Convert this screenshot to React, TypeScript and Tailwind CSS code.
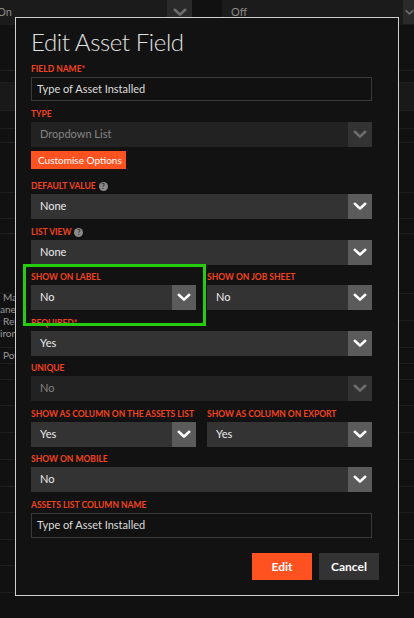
import React from "react";

const Chevron = ({ muted }: { muted?: boolean }) => (
  <svg width="14" height="9" viewBox="0 0 14 9" fill="none">
    <polyline
      points="1.8,1.8 7,6.6 12.2,1.8"
      stroke={muted ? "#6e6e6e" : "#ffffff"}
      strokeWidth="2.6"
      strokeLinecap="round"
      strokeLinejoin="round"
    />
  </svg>
);

const Help = () => (
  <span className="ml-[3px] inline-flex h-[9px] w-[9px] items-center justify-center rounded-full bg-[#8a8a8a] text-[7px] font-bold leading-none text-[#222]">
    ?
  </span>
);

const Label = ({ text, help }: { text: string; help?: boolean }) => (
  <div className="mb-[1px] flex h-[13px] items-center whitespace-nowrap text-[8.5px] font-bold uppercase leading-[13px] text-[#f4431c]">
    {text}
    {help && <Help />}
  </div>
);

const Select = ({ value, disabled }: { value: string; disabled?: boolean }) => (
  <div
    className={`flex h-[25px] items-center ${disabled ? "bg-[#222]" : "bg-[#333]"}`}
  >
    <span
      className={`flex-1 pl-[9px] text-[11px] ${disabled ? "text-[#858585]" : "text-[#ececec]"}`}
    >
      {value}
    </span>
    <div
      className={`flex h-full w-[24px] items-center justify-center ${disabled ? "bg-[#333]" : "bg-[#5b5b5b]"}`}
    >
      <Chevron muted={disabled} />
    </div>
  </div>
);

const Input = ({ value, h }: { value: string; h: string }) => (
  <div
    className={`flex ${h} items-center border border-[#3a3a3a] bg-[#111] pl-[5px] text-[11px] text-[#dedede]`}
  >
    {value}
  </div>
);

const Field = ({
  label,
  help,
  mt,
  children,
}: {
  label: string;
  help?: boolean;
  mt: string;
  children: React.ReactNode;
}) => (
  <div className={mt}>
    <Label text={label} help={help} />
    {children}
  </div>
);

// heights of the rows of the page behind the dialog (border included)
const bgRows = [46, 12, 28, 18, 14, 50, 26, 15, 60, 27, 27, 16, 16, 26, 27, 27, 27, 26, 27, 26, 27, 26];

const Background = () => (
  <div className="flex flex-col">
    <div className="flex h-[25px] border-b border-[#1d1d1d]">
      <div className="flex w-[167px] items-center bg-[#1b1b1b] text-[11px] text-[#8a8a8a]">
        <span className="-ml-[3px]">On</span>
      </div>
      <div className="flex w-[25px] items-center justify-center bg-[#2a2a2a]">
        <Chevron muted />
      </div>
      <div className="w-[30px]" />
      <div className="flex flex-1 items-center bg-[#1b1b1b] pl-[9px] text-[11px] text-[#8a8a8a]">
        Off
      </div>
      <div className="flex w-[11px] items-center bg-[#2a2a2a] pl-[2px]">
        <Chevron muted />
      </div>
    </div>
    {bgRows.map((h, i) => (
      <div
        key={i}
        style={{ height: h }}
        className={`border-b border-[#1e1e1e] ${i === 2 ? "bg-[#191919]" : ""}`}
      >
        {i === 9 && (
          <div className="-mt-[3px] text-[10px] leading-[12px] text-[#9a9a9a]">
            <div className="pl-[3px]">Ma</div>
            <div>anel</div>
            <div className="pl-[3px]">Rel</div>
            <div>iron</div>
          </div>
        )}
        {i === 11 && (
          <div className="pl-[3px] pt-[1px] text-[10px] leading-[12px] text-[#9a9a9a]">
            Pow
          </div>
        )}
      </div>
    ))}
  </div>
);

export default function App() {
  return (
    <div className="relative h-[618px] w-[414px] overflow-hidden bg-[#111] font-['Lato',sans-serif]">
      <Background />

      <div className="absolute left-[15px] top-[17px] h-[579px] w-[384px] border border-[#cfcfcf] bg-[#121212] pl-[15px] pr-[26px] pt-[7px]">
        <h1 className="h-[34px] text-[24px] font-light leading-[34px] tracking-[-0.4px] text-[#e2e2e2]">
          Edit Asset Field
        </h1>

        <Field label="Field Name*" mt="mt-[4px]">
          <Input value="Type of Asset Installed" h="h-[24px]" />
        </Field>

        <Field label="Type" mt="mt-[7px]">
          <Select value="Dropdown List" disabled />
        </Field>
        <button className="mt-[4px] block h-[18px] w-[95px] whitespace-nowrap bg-[#ff5220] pl-[7px] text-left text-[10px] text-white">
          Customise Options
        </button>

        <Field label="Default Value" help mt="mt-[11px]">
          <Select value="None" />
        </Field>
        <Field label="List View" help mt="mt-[7px]">
          <Select value="None" />
        </Field>

        <div className="mt-[6px] grid grid-cols-2 gap-[11px]">
          <div>
            <Label text="Show on Label" />
            <Select value="No" />
          </div>
          <div>
            <Label text="Show on Job Sheet" />
            <Select value="No" />
          </div>
        </div>

        <Field label="Required*" mt="mt-[7px]">
          <Select value="Yes" />
        </Field>
        <Field label="Unique" mt="mt-[6px]">
          <Select value="No" disabled />
        </Field>

        <div className="mt-[7px] grid grid-cols-2 gap-[11px]">
          <div>
            <Label text="Show as column on the assets list" />
            <Select value="Yes" />
          </div>
          <div>
            <Label text="Show as column on export" />
            <Select value="Yes" />
          </div>
        </div>

        <Field label="Show on Mobile" mt="mt-[6px]">
          <Select value="No" />
        </Field>
        <Field label="Assets List Column Name" mt="mt-[7px]">
          <Input value="Type of Asset Installed" h="h-[25px]" />
        </Field>

        <div className="-mr-[7px] mt-[15px] flex justify-end gap-[7px]">
          <button className="h-[27px] w-[60px] bg-[#ff5220] text-[12px] font-bold text-white">
            Edit
          </button>
          <button className="h-[27px] w-[60px] bg-[#333] text-[12px] font-bold text-white">
            Cancel
          </button>
        </div>
      </div>

      <div className="absolute left-[23px] top-[264px] h-[62px] w-[183px] border-[3px] border-[#26cc0e]" />
    </div>
  );
}
